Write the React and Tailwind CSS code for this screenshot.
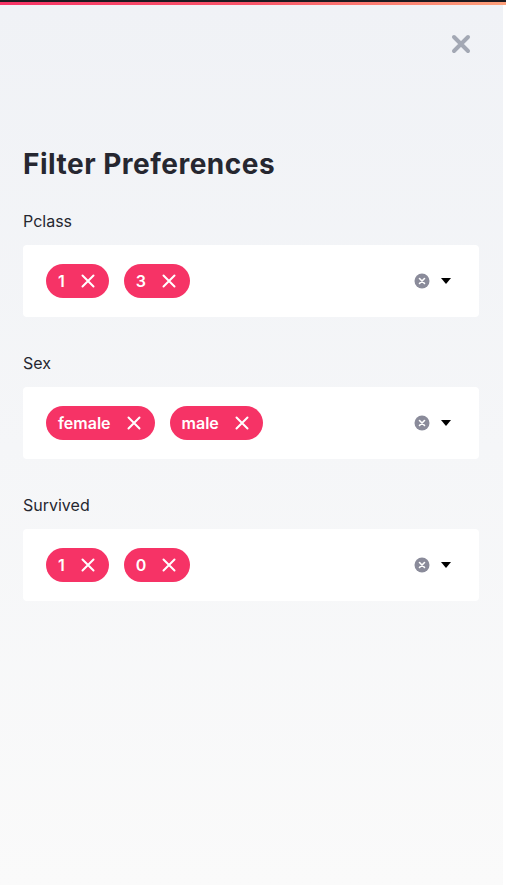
import React from 'react';

function Tag({ label }) {
    return (
        <span className="flex items-center h-[34px] rounded-full bg-[#f63366] pl-3 pr-[14px] text-white text-[16px] font-semibold">
            <span>{label}</span>
            <svg className="ml-[16px]" width="14" height="14" viewBox="0 0 14 14" fill="none" stroke="white" strokeWidth="2" strokeLinecap="round">
                <path d="M1.5 1.5 L12.5 12.5 M12.5 1.5 L1.5 12.5" />
            </svg>
        </span>
    );
}

function MultiSelect({ label, values }) {
    return (
        <div className="flex flex-col">
            <div className="h-6 leading-6 text-[16px] text-[#262730] mb-3">{label}</div>
            <div className="h-[72px] bg-white rounded flex items-center pl-[23px] pr-[28px]">
                <div className="flex gap-[15px] flex-1">
                    {values.map((v) => <Tag key={v} label={v} />)}
                </div>
                <svg width="16" height="16" viewBox="0 0 16 16">
                    <circle cx="8" cy="8" r="7.5" fill="#8a8b9a" />
                    <path d="M5.5 5.5 L10.5 10.5 M10.5 5.5 L5.5 10.5" stroke="white" strokeWidth="1.6" strokeLinecap="round" />
                </svg>
                <svg className="ml-[11px]" width="10" height="6" viewBox="0 0 10 6">
                    <path d="M0 0 L10 0 L5 6 Z" fill="#000" />
                </svg>
            </div>
        </div>
    );
}

export default function App() {
    return (
        <div className="w-[506px] h-[885px] flex flex-col bg-white overflow-hidden" style={{ fontFamily: 'Inter, "Noto Sans", sans-serif' }}>
            <div className="h-[2px] bg-[#1c1a1f] shrink-0" />
            <div className="h-[3px] bg-gradient-to-r from-[#f63366] via-[#f8566a] to-[#fda07a] shrink-0" />
            <div className="flex flex-1">
                <aside className="w-[503px] bg-gradient-to-b from-[#f0f2f6] to-[#fafafa] flex flex-col px-[23px] pr-[24px]">
                    {/* close button */}
                    <div className="flex justify-end pt-[28px] pr-[7px]">
                        <svg width="22" height="22" viewBox="0 0 22 22" fill="none" stroke="#a3a8b4" strokeWidth="4" strokeLinecap="round">
                            <path d="M4 4 L18 18 M18 4 L4 18" />
                        </svg>
                    </div>
                    <h1 className="mt-[91px] h-9 leading-9 text-[28px] font-bold text-[#262730] tracking-[0.5px]">Filter Preferences</h1>
                    <div className="mt-[27px] flex flex-col gap-[34px]">
                        <MultiSelect label="Pclass" values={['1', '3']} />
                        <MultiSelect label="Sex" values={['female', 'male']} />
                        <MultiSelect label="Survived" values={['1', '0']} />
                    </div>
                </aside>
                <div className="flex-1 bg-white" />
            </div>
        </div>
    );
}
